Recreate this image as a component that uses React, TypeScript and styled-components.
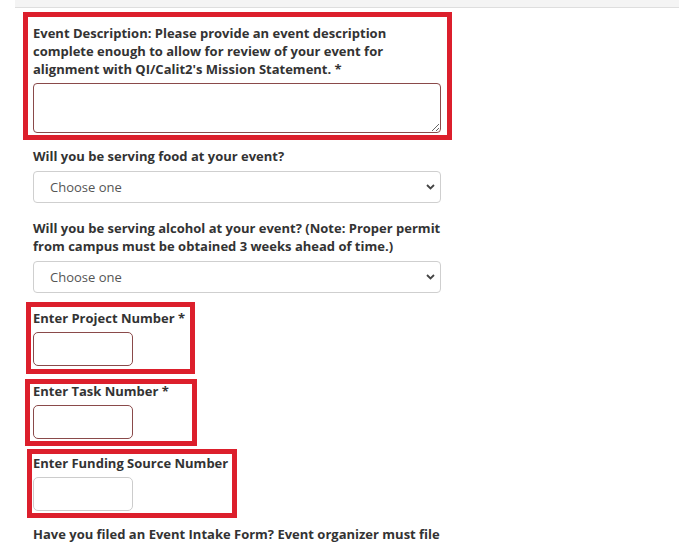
import React from "react";
import styled, { createGlobalStyle } from "styled-components";

const GlobalStyle = createGlobalStyle`
  html, body { margin: 0; padding: 0; background: #ffffff; }
  body { font-family: "Open Sans", "Noto Sans", sans-serif; color: #333333; }
  * { box-sizing: border-box; }
`;

const Page = styled.div`
  width: 679px;
  height: 544px;
  overflow: hidden;
`;

const TopBar = styled.div`
  margin-left: 15px;
  height: 8px;
  background: #f4f4f4;
  border-bottom: 1px solid #dedede;
`;

const Form = styled.div`
  display: flex;
  flex-direction: column;
  padding-left: 33px;
  width: 445px;
`;

type Box = {
  $mt: number;
  $ml: number;
  $pt: number;
  $pb: number;
  $pl: number;
  $w: number;
};

const Highlight = styled.div<Box>`
  display: flex;
  flex-direction: column;
  margin-top: ${(p) => p.$mt}px;
  margin-left: ${(p) => p.$ml}px;
  width: ${(p) => p.$w}px;
  padding: ${(p) => p.$pt}px 0 ${(p) => p.$pb}px ${(p) => p.$pl}px;
  border: 5px solid #dc1f2c;
`;

const Group = styled.div<{ $mt: number }>`
  display: flex;
  flex-direction: column;
  margin-top: ${(p) => p.$mt}px;
`;

const Label = styled.div<{ $shift?: number; $w?: number }>`
  font-size: 13px;
  font-weight: 700;
  line-height: 18px;
  color: #333333;
  margin-top: ${(p) => p.$shift ?? 0}px;
  margin-bottom: 5px;
  width: ${(p) => (p.$w ? `${p.$w}px` : "auto")};
  white-space: ${(p) => (p.$w ? "normal" : "nowrap")};
`;

const SelectLabel = styled(Label)`
  margin-bottom: 6px;
`;

const TextArea = styled.textarea`
  width: 408px;
  height: 50px;
  border: 1px solid #8a4a4a;
  border-radius: 4px;
  resize: vertical;
  font-family: inherit;
  font-size: 13px;
  padding: 6px 12px;
  background: #fff;
`;

const SelectWrap = styled.div`
  position: relative;
  width: 408px;
  height: 32px;
`;

const Select = styled.select`
  appearance: none;
  -webkit-appearance: none;
  width: 100%;
  height: 100%;
  border: 1px solid #cfcfcf;
  border-radius: 4px;
  background: #ffffff;
  font-family: "Open Sans", sans-serif;
  font-size: 13px;
  color: #555555;
  padding: 0 30px 0 16px;
  outline: none;
`;

const Chevron = styled.svg`
  position: absolute;
  right: 6px;
  top: 13px;
  width: 9px;
  height: 6px;
  pointer-events: none;
`;

const TextInput = styled.input<{ $invalid?: boolean }>`
  width: 100px;
  height: 34px;
  border: 1px solid ${(p) => (p.$invalid ? "#8a4a4a" : "#cccccc")};
  border-radius: 5px;
  background: #ffffff;
  font-family: inherit;
  font-size: 13px;
  padding: 0 8px;
`;

const Choose = ({ mt, label }: { mt: number; label: React.ReactNode }) => (
  <Group $mt={mt}>
    <SelectLabel $w={412}>{label}</SelectLabel>
    <SelectWrap>
      <Select defaultValue="">
        <option value="">Choose one</option>
        <option value="yes">Yes</option>
        <option value="no">No</option>
      </Select>
      <Chevron viewBox="0 0 9 6">
        <path d="M1 1 L4.5 4.5 L8 1" fill="none" stroke="#444" strokeWidth="1.8" />
      </Chevron>
    </SelectWrap>
  </Group>
);

export default function App() {
  return (
    <Page>
      <GlobalStyle />
      <TopBar />
      <Form>
        <Highlight $mt={4} $ml={-10} $pt={7} $pb={2} $pl={5} $w={429}>
          <Label $w={408}>
            Event Description: Please provide an event description complete
            enough to allow for review of your event for alignment with
            QI/Calit2's Mission Statement. *
          </Label>
          <TextArea />
        </Highlight>

        <Choose mt={7} label="Will you be serving food at your event?" />
        <Choose
          mt={16}
          label="Will you be serving alcohol at your event? (Note: Proper permit from campus must be obtained 3 weeks ahead of time.)"
        />

        <Highlight $mt={9} $ml={-7} $pt={2} $pb={3} $pl={2} $w={169}>
          <Label>Enter Project Number *</Label>
          <TextInput $invalid />
        </Highlight>

        <Highlight $mt={5} $ml={-8} $pt={0} $pb={2} $pl={3} $w={172}>
          <Label $shift={-2}>Enter Task Number *</Label>
          <TextInput $invalid />
        </Highlight>

        <Highlight $mt={3} $ml={-6} $pt={0} $pb={2} $pl={1} $w={210}>
          <Label>Enter Funding Source Number</Label>
          <TextInput />
        </Highlight>

        <Group $mt={7}>
          <Label>
            Have you filed an Event Intake Form? Event organizer must file
          </Label>
        </Group>
      </Form>
    </Page>
  );
}
